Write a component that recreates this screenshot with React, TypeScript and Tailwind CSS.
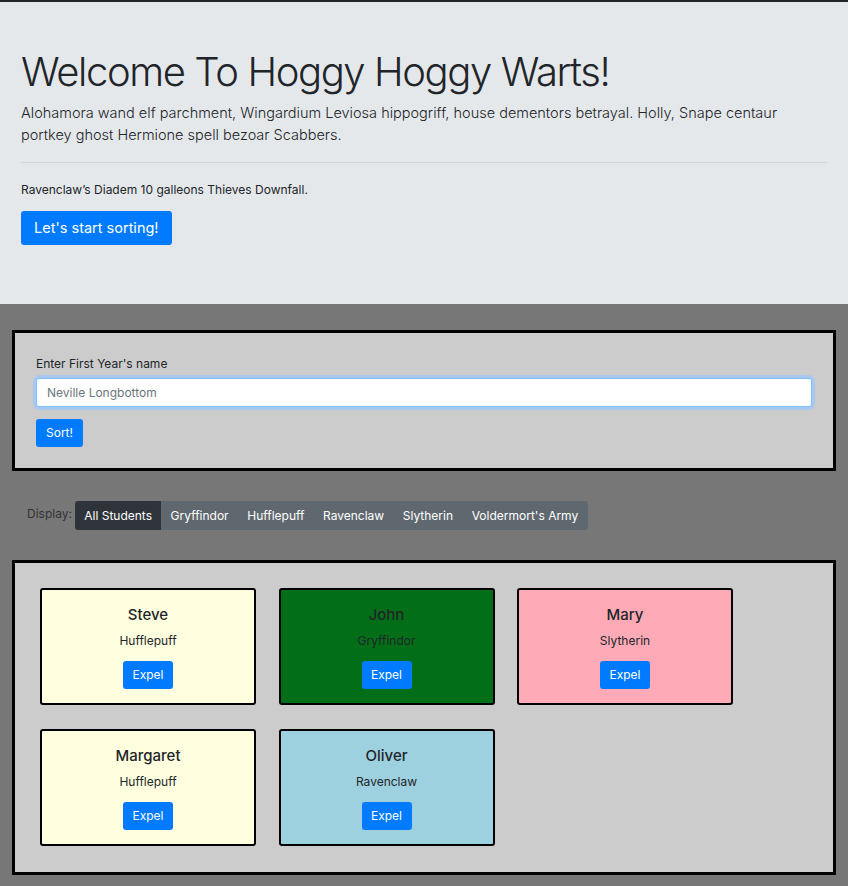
const students = [
  { name: 'Steve', house: 'Hufflepuff', bg: 'bg-[#ffffe0]' },
  { name: 'John', house: 'Gryffindor', bg: 'bg-[#026f18]' },
  { name: 'Mary', house: 'Slytherin', bg: 'bg-[#ffaab6]' },
  { name: 'Margaret', house: 'Hufflepuff', bg: 'bg-[#ffffe0]' },
  { name: 'Oliver', house: 'Ravenclaw', bg: 'bg-[#9ed1e0]' },
];

const filters = ['All Students', 'Gryffindor', 'Hufflepuff', 'Ravenclaw', 'Slytherin', "Voldermort's Army"];

function StudentCard({ name, house, bg }: { name: string; house: string; bg: string }) {
  return (
    <div className={`w-[216px] h-[117px] border-2 border-black rounded-[3px] flex flex-col items-center pt-[14px] ${bg}`}>
      <div className="text-[15px] font-medium leading-[22px] text-[#212529]">{name}</div>
      <div className="text-[12px] leading-[18px] mt-[6px] text-[#212529]">{house}</div>
      <button className="mt-[11px] w-[50px] h-[28px] rounded-[3px] bg-[#007bff] text-white text-[12px]">Expel</button>
    </div>
  );
}

export default function App() {
  return (
    <div className="min-h-[886px] bg-[#777777] font-['Inter','Liberation_Sans',sans-serif] text-[#212529] border-t-2 border-[#212529]">
      <div className="bg-[#e5e8eb] h-[302px] px-[21px] pt-[45px]">
        <h1 className="text-[40px] font-light leading-[50px] tracking-[-1.4px]">Welcome To Hoggy Hoggy Warts!</h1>
        <p className="text-[14.5px] font-light leading-[22px] mt-[5px] pr-[20px]">
          Alohamora wand elf parchment, Wingardium Leviosa hippogriff, house dementors betrayal. Holly, Snape centaur portkey ghost Hermione spell bezoar Scabbers.
        </p>
        <hr className="mt-[16px] border-t border-[#d3d6d9]" />
        <p className="text-[12px] leading-[18px] mt-[18px]">Ravenclaw&#8217;s Diadem 10 galleons Thieves Downfall.</p>
        <button className="mt-[12px] h-[34px] px-[13px] rounded-[3px] bg-[#007bff] text-white text-[14.5px]">Let's start sorting!</button>
      </div>

      <div className="mx-[12px] mt-[26px] h-[141px] border-[3px] border-black bg-[#cccccc] px-[21px] pt-[22px]">
        <label className="block text-[12px] leading-[18px] text-[#212529]">Enter First Year's name</label>
        <div className="mt-[5px] rounded-[4px] ring-[3px] ring-[#a8c8f0]">
          <input
            className="block w-full h-[29px] rounded-[3px] border border-[#80bdff] bg-white px-[10px] text-[12px] outline-none placeholder:text-[#6c757d]"
            placeholder="Neville Longbottom"
          />
        </div>
        <button className="mt-[12px] w-[47px] h-[28px] rounded-[3px] bg-[#007bff] text-white text-[12px]">Sort!</button>
      </div>

      <div className="mt-[30px] ml-[27px] flex items-center gap-[3px]">
        <span className="text-[12px] text-[#333] -mt-[4px]">Display:</span>
        <div className="flex rounded-[3px] overflow-hidden">
          {filters.map((f, i) => (
            <button
              key={f}
              className={`h-[29px] px-[9.3px] text-[12px] text-white ${i === 0 ? 'bg-[#2f343a]' : 'bg-[#5f686f]'}`}
            >
              {f}
            </button>
          ))}
        </div>
      </div>

      <div className="mx-[12px] mt-[30px] h-[315px] border-[3px] border-black bg-[#cccccc] pl-[25px] pt-[25px]">
        <div className="flex flex-wrap gap-x-[22.5px] gap-y-[24px] w-[700px]">
          {students.map((s) => (
            <StudentCard key={s.name} {...s} />
          ))}
        </div>
      </div>
    </div>
  );
}
